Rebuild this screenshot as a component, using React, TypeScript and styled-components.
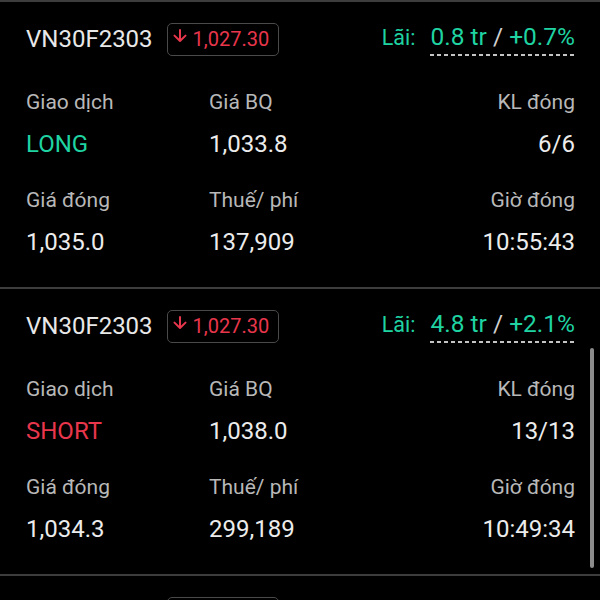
import React from "react";
import styled, { createGlobalStyle } from "styled-components";

const GlobalStyle = createGlobalStyle`
  html, body {
    margin: 0;
    padding: 0;
    background: #000;
  }
  body {
    font-family: Roboto, "Noto Sans", Arial, sans-serif;
  }
`;

const GREEN = "#1fd3a2";
const RED = "#e8364c";

interface Position {
  symbol: string;
  price: string;
  pnl: string;
  pct: string;
  side: "LONG" | "SHORT";
  avg: string;
  qty: string;
  close: string;
  fee: string;
  time: string;
}

const positions: Position[] = [
  {
    symbol: "VN30F2303",
    price: "1,027.30",
    pnl: "0.8 tr",
    pct: "+0.7%",
    side: "LONG",
    avg: "1,033.8",
    qty: "6/6",
    close: "1,035.0",
    fee: "137,909",
    time: "10:55:43",
  },
  {
    symbol: "VN30F2303",
    price: "1,027.30",
    pnl: "4.8 tr",
    pct: "+2.1%",
    side: "SHORT",
    avg: "1,038.0",
    qty: "13/13",
    close: "1,034.3",
    fee: "299,189",
    time: "10:49:34",
  },
  {
    symbol: "VN30F2303",
    price: "1,027.30",
    pnl: "1.2 tr",
    pct: "+0.4%",
    side: "LONG",
    avg: "1,031.5",
    qty: "5/5",
    close: "1,033.9",
    fee: "114,920",
    time: "10:41:12",
  },
];

const DownArrow = () => (
  <svg width="14" height="13" viewBox="0 0 14 13" fill="none">
    <path
      d="M7 1v11M1.5 6.6L7 12l5.5-5.4"
      stroke={RED}
      strokeWidth="2"
      strokeLinecap="round"
      strokeLinejoin="round"
    />
  </svg>
);

const App: React.FC = () => {
  return (
    <>
      <GlobalStyle />
      <Screen>
        <List>
          {positions.map((p, i) => (
            <Card key={i}>
              <Header>
                <Symbol>{p.symbol}</Symbol>
                <PriceBadge>
                  <ArrowWrap>
                    <DownArrow />
                  </ArrowWrap>
                  <span>{p.price}</span>
                </PriceBadge>
                <Profit>
                  <ProfitLabel>Lãi:</ProfitLabel>
                  <ProfitValue>
                    {p.pnl}
                    <Slash> / </Slash>
                    {p.pct}
                  </ProfitValue>
                </Profit>
              </Header>
              <Grid>
                <Field>
                  <Label>Giao dịch</Label>
                  <Value color={p.side === "LONG" ? GREEN : RED}>
                    {p.side}
                  </Value>
                </Field>
                <Field>
                  <Label>Giá BQ</Label>
                  <Value>{p.avg}</Value>
                </Field>
                <Field $right>
                  <Label>KL đóng</Label>
                  <Value>{p.qty}</Value>
                </Field>
                <Field>
                  <Label>Giá đóng</Label>
                  <Value>{p.close}</Value>
                </Field>
                <Field>
                  <Label>Thuế/ phí</Label>
                  <Value>{p.fee}</Value>
                </Field>
                <Field $right>
                  <Label>Giờ đóng</Label>
                  <Value>{p.time}</Value>
                </Field>
              </Grid>
            </Card>
          ))}
        </List>
        <ScrollThumb />
      </Screen>
    </>
  );
};

const Screen = styled.div`
  position: relative;
  width: 600px;
  height: 600px;
  overflow: hidden;
  background: #000;
`;

const List = styled.div`
  display: flex;
  flex-direction: column;
  border-top: 2px solid #3d3d3d;
`;

const Card = styled.div`
  height: 285px;
  box-sizing: content-box;
  padding: 0 25px 0 26px;
  border-bottom: 2px solid #3d3d3d;
  display: flex;
  flex-direction: column;
`;

const Header = styled.div`
  margin-top: 20px;
  height: 34px;
  display: flex;
  align-items: center;
`;

const Symbol = styled.span`
  font-size: 24px;
  color: #e8e8e8;
`;

const PriceBadge = styled.div`
  margin-left: 14px;
  height: 33px;
  box-sizing: border-box;
  padding: 0 9px 0 5px;
  border: 1.5px solid #4a4a4a;
  border-radius: 5px;
  display: flex;
  align-items: center;
  gap: 6px;
  font-size: 20px;
  color: ${RED};
`;

const ArrowWrap = styled.span`
  display: flex;
  margin-top: -7px;
`;

const Profit = styled.div`
  margin-left: auto;
  display: flex;
  align-items: baseline;
  gap: 15px;
  color: ${GREEN};
`;

const ProfitLabel = styled.span`
  font-size: 21.5px;
`;

const ProfitValue = styled.span`
  font-size: 24.5px;
  padding-bottom: 5px;
  background-image: linear-gradient(to right, #c4c4c4 62%, transparent 0);
  background-size: 7px 2px;
  background-repeat: repeat-x;
  background-position: left bottom;
  white-space: pre;
`;

const Slash = styled.span`
  color: #d0d0d0;
`;

const Grid = styled.div`
  margin-top: 32px;
  display: grid;
  grid-template-columns: repeat(3, 1fr);
  row-gap: 28px;
`;

const Field = styled.div<{ $right?: boolean }>`
  display: flex;
  flex-direction: column;
  gap: 14px;
  align-items: ${(p) => (p.$right ? "flex-end" : "flex-start")};
`;

const Label = styled.span`
  font-size: 21px;
  line-height: 28px;
  color: #b8b8b8;
`;

const Value = styled.span<{ color?: string }>`
  font-size: 24px;
  line-height: 28px;
  color: ${(p) => p.color || "#ececec"};
`;

const ScrollThumb = styled.div`
  position: absolute;
  right: 6px;
  top: 348px;
  width: 4px;
  height: 220px;
  border-radius: 2px;
  background: #8c8c8c;
`;

export default App;
